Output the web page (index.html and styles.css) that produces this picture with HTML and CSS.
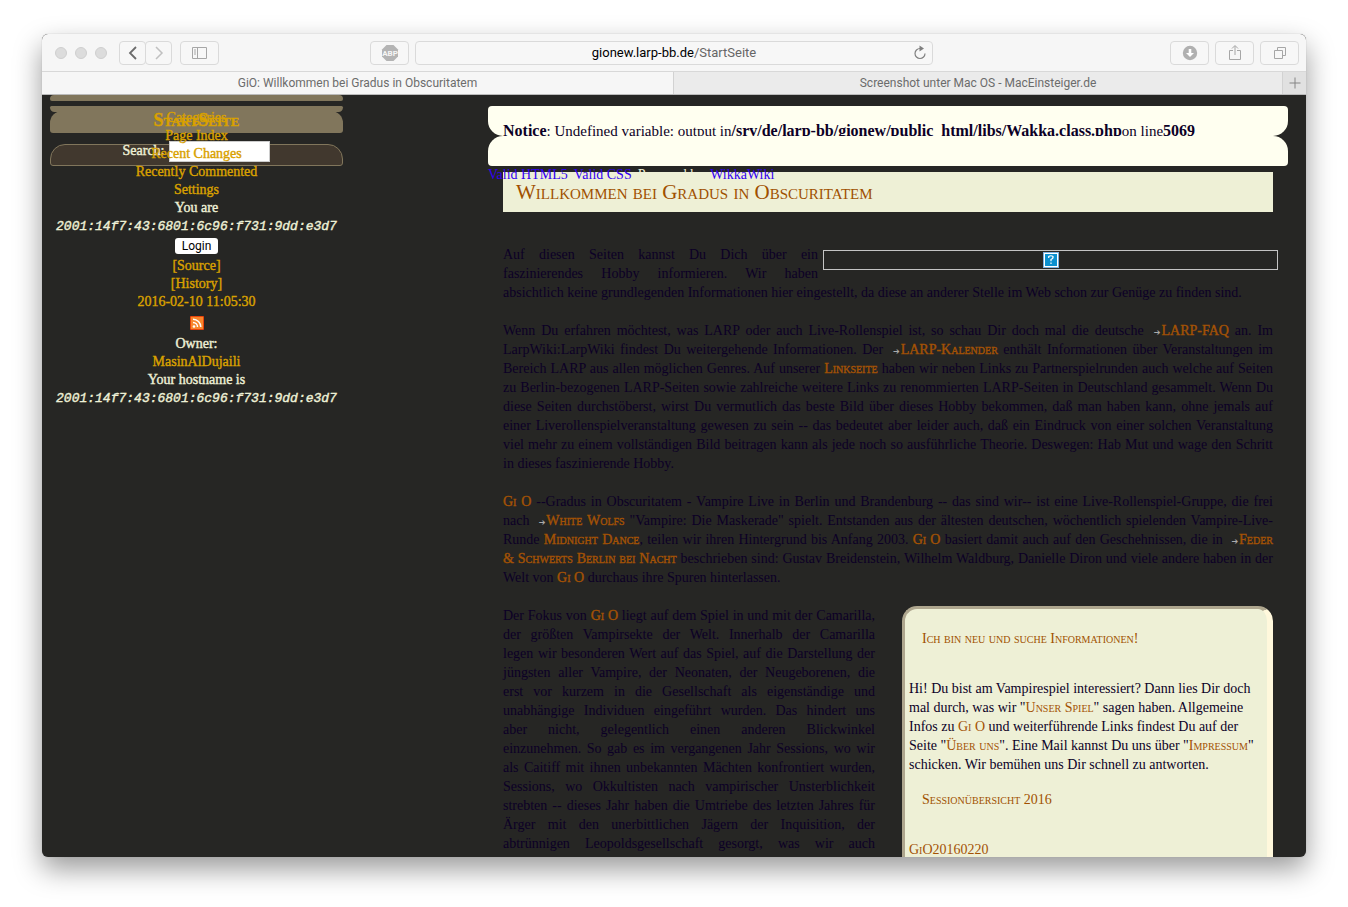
FILE: index.html
```html
<!DOCTYPE html>
<html lang="de">
<head>
<meta charset="utf-8">
<title>GiO: Willkommen bei Gradus in Obscuritatem</title>
<link rel="stylesheet" href="styles.css">
</head>
<body>
<div class="window">
  <header class="toolbar">
    <div class="side">
      <span class="dots"><i></i><i></i><i></i></span>
      <div class="nav">
        <button class="tool half-left" aria-label="Zurück"><svg width="10" height="14" viewBox="0 0 10 14"><path d="M8 1 2 7l6 6" fill="none" stroke="#6b6b6b" stroke-width="1.8"/></svg></button>
        <button class="tool half-right" aria-label="Vor"><svg width="10" height="14" viewBox="0 0 10 14"><path d="m2 1 6 6-6 6" fill="none" stroke="#c0c0c0" stroke-width="1.5"/></svg></button>
      </div>
      <button class="tool" aria-label="Seitenleiste"><svg width="16" height="14" viewBox="0 0 16 14"><path d="M.500 1.500h14v11H.500zM5.500 1.500v11M2 4h2M2 6h2M2 8h2" fill="none" stroke="#a6a6a6"/></svg></button>
    </div>
    <div class="address">
      <button class="tool" aria-label="Adblock Plus"><svg width="18" height="18" viewBox="0 0 18 18"><path d="M5.500 1h7L17 5.500v7L12.500 17h-7L1 12.500v-7z" fill="#b4b4b4"/><text x="9" y="12" text-anchor="middle" class="abp">ABP</text></svg></button>
      <button class="url"><span><b>gionew.larp-bb.de</b>/StartSeite</span><svg width="14" height="16" viewBox="0 0 14 16"><path d="M7 3.500a5 5 0 1 0 5 5" fill="none" stroke="#808080" stroke-width="1.200"/><path d="m6.500.500 4.500 3-4.500 3z" fill="#808080"/></svg></button>
    </div>
    <div class="side end">
      <button class="tool" aria-label="Downloads"><svg width="16" height="16" viewBox="0 0 16 16"><circle cx="8" cy="8" r="7.200" fill="#b0b0b0"/><path d="M6.700 4h2.600v4H12l-4 4-4-4h2.700z" fill="#fff"/></svg></button>
      <button class="tool" aria-label="Teilen"><svg width="14" height="18" viewBox="0 0 14 18"><path d="M5 6.500H1.500v9h11v-9H9M7 11V2M4 4.500l3-3 3 3" fill="none" stroke="#a6a6a6"/></svg></button>
      <button class="tool" aria-label="Alle Tabs"><svg width="14" height="14" viewBox="0 0 14 14"><path d="M1.500 4.500h8v8h-8zM4.500 4V1.500h8v8H10" fill="none" stroke="#a6a6a6"/></svg></button>
    </div>
  </header>
  <nav class="tabs">
    <button class="tab active">GiO: Willkommen bei Gradus in Obscuritatem</button>
    <button class="tab">Screenshot unter Mac OS - MacEinsteiger.de</button>
    <button class="plus" aria-label="Neuer Tab"><svg width="12" height="12" viewBox="0 0 12 12"><path d="M6 .500v11M.500 6h11" stroke="#858585"/></svg></button>
  </nav>
  <div class="page">
    <aside class="sidebar">
      <div class="panels">
        <div class="bar top"></div>
        <div class="bar mid"></div>
        <h2 class="bar name">StartSeite</h2>
        <form class="search"><label for="q">Search:</label><input id="q" type="text"></form>
      </div>
      <div class="menu">
        <a href="#">Categories</a>
        <a href="#">Page Index</a>
        <a href="#">Recent Changes</a>
        <a href="#">Recently Commented</a>
        <a href="#">Settings</a>
        <span>You are</span>
        <code>2001:14f7:43:6801:6c96:f731:9dd:e3d7</code>
        <button class="login">Login</button>
        <a href="#">[Source]</a>
        <a href="#">[History]</a>
        <a href="#">2016-02-10 11:05:30</a>
        <a class="feed" href="#" aria-label="RSS"><svg width="14" height="14" viewBox="0 0 14 14"><rect width="14" height="14" rx="1" fill="#e8430a"/><rect x="1" y="1" width="12" height="12" fill="#f8862c"/><circle cx="4" cy="10.500" r="1.300" fill="#fff"/><path d="M3 6.500A4.500 4.500 0 0 1 7.500 11M3 3.200A7.800 7.800 0 0 1 10.800 11" fill="none" stroke="#fff" stroke-width="1.500"/></svg></a>
        <span>Owner:</span>
        <a href="#">MasinAlDujaili</a>
        <span>Your hostname is</span>
        <code>2001:14f7:43:6801:6c96:f731:9dd:e3d7</code>
      </div>
    </aside>
    <main class="main">
      <div class="notice"><b>Notice</b>: Undefined variable: output in<b>/srv/de/larp-bb/gionew/public_html/libs/Wakka.class.php</b>on line<b>5069</b></div>
      <div class="panel"></div>
      <div class="article">
        <h1>Willkommen bei Gradus in Obscuritatem</h1>
        <div class="missing" role="img" aria-label="Bild fehlt"><svg width="16" height="16" viewBox="0 0 16 16"><rect width="16" height="16" fill="#7eb0dc"/><rect x="1" y="1" width="14" height="14" fill="#fff"/><rect x="2" y="2" width="12" height="12" fill="#0b90cf"/><path d="M5.700 6V4.500Q8 3 10 4.500 10.500 6.500 8 7.500v1.800M8 10.500V12" fill="none" stroke="#fff" stroke-width="1.200"/></svg></div>
        <p>Auf diesen Seiten kannst Du Dich über ein<br>faszinierendes Hobby informieren. Wir haben<br><span class="last">absichtlich keine grundlegenden Informationen hier eingestellt, da diese an anderer Stelle im Web schon zur Genüge zu finden sind.</span></p>
        <p>Wenn Du erfahren möchtest, was LARP oder auch Live-Rollenspiel ist, so schau Dir doch mal die deutsche <a class="ext" href="#">LARP-FAQ</a> an. Im<br>LarpWiki:LarpWiki findest Du weitergehende Informationen. Der <a class="ext" href="#">LARP-Kalender</a> enthält Informationen über Veranstaltungen im<br>Bereich LARP aus allen möglichen Genres. Auf unserer <a href="#">Linkseite</a> haben wir neben Links zu Partnerspielrunden auch welche auf Seiten<br>zu Berlin-bezogenen LARP-Seiten sowie zahlreiche weitere Links zu renommierten LARP-Seiten in Deutschland gesammelt. Wenn Du<br>diese Seiten durchstöberst, wirst Du vermutlich das beste Bild über dieses Hobby bekommen, daß man haben kann, ohne jemals auf<br>einer Liverollenspielveranstaltung gewesen zu sein -- das bedeutet aber leider auch, daß ein Eindruck von einer solchen Veranstaltung<br>viel mehr zu einem vollständigen Bild beitragen kann als jede noch so ausführliche Theorie. Deswegen: Hab Mut und wage den Schritt<br><span class="last">in dieses faszinierende Hobby.</span></p>
        <p><a href="#">Gi O</a> --Gradus in Obscuritatem - Vampire Live in Berlin und Brandenburg -- das sind wir-- ist eine Live-Rollenspiel-Gruppe, die frei<br>nach <a class="ext" href="#">White Wolfs</a> "Vampire: Die Maskerade" spielt. Entstanden aus der ältesten deutschen, wöchentlich spielenden Vampire-Live-<br>Runde <a href="#">Midnight Dance</a>, teilen wir ihren Hintergrund bis Anfang 2003. <a href="#">Gi O</a> basiert damit auch auf den Geschehnissen, die in <a class="ext" href="#">Feder<br>&amp; Schwerts Berlin bei Nacht</a> beschrieben sind: Gustav Breidenstein, Wilhelm Waldburg, Danielle Diron und viele andere haben in der<br><span class="last">Welt von <a href="#">Gi O</a> durchaus ihre Spuren hinterlassen.</span></p>
        <div class="columns">
          <p>Der Fokus von <a href="#">Gi O</a> liegt auf dem Spiel in und mit der Camarilla,<br>der größten Vampirsekte der Welt. Innerhalb der Camarilla<br>legen wir besonderen Wert auf das Spiel, auf die Darstellung der<br>jüngsten aller Vampire, der Neonaten, der Neugeborenen, die<br>erst vor kurzem in die Gesellschaft als eigenständige und<br>unabhängige Individuen eingeführt wurden. Das hindert uns<br>aber nicht, gelegentlich einen anderen Blickwinkel<br>einzunehmen. So gab es im vergangenen Jahr Sessions, wo wir<br>als Caitiff mit ihnen unbekannten Mächten konfrontiert wurden,<br>Sessions, wo Okkultisten nach vampirischer Unsterblichkeit<br>strebten -- dieses Jahr haben die Umtriebe des letzten Jahres für<br>Ärger mit den unerbittlichen Jägern der Inquisition, der<br>abtrünnigen Leopoldsgesellschaft gesorgt, was wir auch</p>
          <section class="info">
            <h3>Ich bin neu und suche Informationen!</h3>
            <p>Hi! Du bist am Vampirespiel interessiert? Dann lies Dir doch<br>mal durch, was wir "<a href="#">Unser Spiel</a>" sagen haben. Allgemeine<br>Infos zu <a href="#">Gi O</a> und weiterführende Links findest Du auf der<br>Seite "<a href="#">Über uns</a>". Eine Mail kannst Du uns über "<a href="#">Impressum</a>"<br>schicken. Wir bemühen uns Dir schnell zu antworten.</p>
            <h3>Sessionübersicht 2016</h3>
            <p><a href="#">GiO20160220</a></p>
          </section>
        </div>
        <footer class="credits"><a href="#">Valid HTML5</a><a href="#">Valid CSS</a><span>Powered by</span><a href="#">WikkaWiki</a></footer>
      </div>
    </main>
  </div>
</div>
</body>
</html>
```
FILE: styles.css
```css
* { box-sizing: border-box; }
body {
  margin: 0;
  height: 100vh;
  padding: 34px 42px 50px;
  background: #fff;
  font: 14px/19px "Liberation Serif", serif;
  color: #0c0026;
  overflow: hidden;
}
a { text-decoration: none; }
button { font-family: Roboto, sans-serif; margin: 0; }
.window {
  height: 100%;
  display: flex;
  flex-direction: column;
  overflow: hidden;
  border-radius: 6px;
  background: #262624;
  box-shadow: 0 0 1px #999, 0 12px 28px rgba(0, 0, 0, .4);
}
.toolbar {
  flex: none;
  display: flex;
  align-items: center;
  justify-content: space-between;
  height: 38px;
  padding: 0 7px 0 13px;
  background: #f6f6f6;
  border-bottom: 1px solid #d8d8d8;
}
.side { flex: 315 0 0; display: flex; align-items: center; gap: 8px; }
.side.end { flex: 366 0 0; justify-content: flex-end; gap: 6px; }
.dots { display: flex; gap: 8px; margin-right: 4px; }
.dots i { width: 12px; height: 12px; border-radius: 50%; background: #dcdcdc; border: 1px solid #cfcfcf; }
.nav { display: flex; }
.tool {
  width: 39px;
  height: 24px;
  padding: 0;
  display: flex;
  align-items: center;
  justify-content: center;
  background: #f7f7f7;
  border: 1px solid #dadada;
  border-radius: 4px;
}
.half-left, .half-right { width: 27px; }
.half-right { margin-left: -1px; }
.abp { font: bold 8px Roboto, sans-serif; fill: #f6f6f6; }
.address { flex: 563 0 0; display: flex; gap: 6px; }
.url {
  flex: 1;
  height: 24px;
  padding: 0 5px;
  display: flex;
  align-items: center;
  background: #f7f7f7;
  border: 1px solid #dadada;
  border-radius: 4px;
  font-size: 13px;
  color: #666;
}
.url span { flex: 1; padding-left: 14px; text-align: center; }
.url b { font-weight: 400; color: #000; }
.tabs { flex: none; display: flex; height: 23px; border-bottom: 1px solid #bbb; }
.tab {
  flex: 1;
  padding: 0;
  background: #ebebeb;
  border: 0;
  border-right: 1px solid #d2d2d2;
  font-size: 12px;
  color: #6c6c6c;
}
.tab.active { background: #f6f6f6; flex: 0 0 50%; }
.plus { width: 23px; padding: 0; display: flex; align-items: center; justify-content: center; border: 0; background: #e1e1e1; }
.page { flex: 1; min-height: 0; display: flex; justify-content: space-between; padding: 0 18px 0 8px; overflow: hidden; }

.sidebar { flex: 0 0 293px; display: grid; align-content: start; text-align: center; line-height: 18px; color: #eef0d6; -webkit-text-stroke: .4px; }
.panels, .menu { grid-area: 1 / 1; }
.bar { background: #81765c; margin: 0; }
.top { height: 6px; border-radius: 4px 4px 2px 2px; }
.mid { height: 6px; margin-top: 5px; border-radius: 2px 2px 6px 6px; }
.name { height: 22px; margin-top: -1px; border-radius: 12px 12px 3px 3px; font: bold 18px/18px "Liberation Serif", serif; font-variant: small-caps; color: #d9a100; }
.search { height: 22px; margin-top: 11px; border: 1px solid #81765c; border-radius: 15px 15px 3px 3px; background: #41382e; line-height: 12px; display: flex; justify-content: center; gap: 5px; }
.search input { width: 101px; height: 21px; margin-top: -4px; border: 1px solid #ccc; background: #fff; }
.menu { padding-top: 14px; display: flex; flex-direction: column; align-items: center; }
.menu a { color: #d9a100; }
.menu code { height: 18px; font: italic 13px/20px "Liberation Mono", monospace; }
.login { height: 16px; margin: 3px 0; padding: 0 7px; border: 0; border-radius: 3px; background: #fff; color: #000; font-size: 12px; line-height: 16px; -webkit-text-stroke: 0; }
.feed { height: 24px; padding-top: 5px; display: flex; }

.main { flex: 0 0 800px; min-width: 0; padding-top: 11px; }
.notice, .panel { height: 30px; background: #fffff0; }
.notice { padding: 15px 15px 0; overflow: hidden; border-radius: 4px 4px 15px 15px; white-space: nowrap; font-size: 15px; }
.notice b { font-size: 16px; }
.panel { border-radius: 15px 15px 4px 4px; }
.article { position: relative; padding: 6px 15px 0; text-align: justify; text-align-last: justify; white-space: nowrap; }
.credits { position: absolute; top: -1px; left: 0; display: flex; gap: 6px; color: #eef0d6; text-align-last: left; }
.credits a { color: #3200f0; }
h1 { margin: 0 0 33px; padding: 0 13px; height: 40px; background: #eef0d6; font: 21px/40px "Liberation Serif", serif; font-variant: small-caps; color: #a05000; text-align-last: left; }
.article p { margin: 0 0 19px; }
.article p a { color: #a35205; font-variant: small-caps; }
.article > p a, .columns > p a { -webkit-text-stroke: .4px; }
.last { display: block; text-align-last: left; }
.missing { float: right; width: 455px; height: 20px; margin: 5px -5px 0 5px; border: 1px solid #c4c4c4; display: flex; align-items: center; justify-content: center; }
.ext::before { content: "➔"; display: inline-block; width: 11px; margin-right: 1px; font: 8px/8px "DejaVu Sans", sans-serif; color: #aaa; text-align-last: right; -webkit-text-stroke: 0; }
.columns { display: grid; grid-template-columns: 372px 371px; justify-content: space-between; }
.info { min-height: 400px; padding: 20px 4px; border: 3px solid #aea68e; border-right: 6px solid #fff8dc; border-radius: 15px; background: #eef0d6; text-align-last: left; }
.info h3 { margin: 0 13px 31px; font: 14px/19px "Liberation Serif", serif; font-variant: small-caps; color: #a05000; }
.article .info p { margin-bottom: 16px; }
```
